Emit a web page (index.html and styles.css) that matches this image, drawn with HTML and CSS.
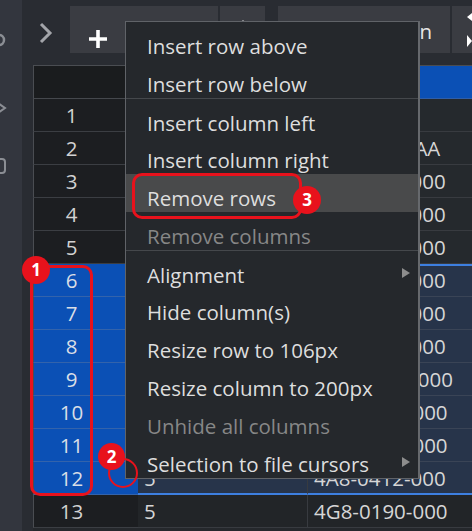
FILE: index.html
```html
<!DOCTYPE html>
<html>
<head>
<meta charset="utf-8">
<link rel="stylesheet" href="styles.css">
</head>
<body>
<div class="app">
  <aside class="sidebar">
    <svg width="22" height="531" viewBox="0 0 22 531">
      <circle cx="-1" cy="40" r="5" fill="none" stroke="#8b8e94" stroke-width="2.5"/>
      <path d="M-2 103 L5 108 L-2 113" fill="none" stroke="#8b8e94" stroke-width="2"/>
      <rect x="-10" y="159" width="15" height="14" rx="3" fill="none" stroke="#8b8e94" stroke-width="2"/>
    </svg>
  </aside>
  <main class="main">
    <div class="toolbar">
      <div class="nav">
        <svg width="14" height="22" viewBox="0 0 14 22"><path d="M2 2 L11 11 L2 20" fill="none" stroke="#a3a5aa" stroke-width="3"/></svg>
      </div>
      <div class="tbtn tb-add">
        <svg width="20" height="20" viewBox="0 0 20 20"><path d="M10 1 V19 M1 10 H19" stroke="#ffffff" stroke-width="3.6"/></svg>
      </div>
      <div class="tbtn tb-move">
        <svg width="14" height="20" viewBox="0 0 14 20"><polygon points="4,6 10,14 -2,14" fill="#ffffff"/></svg>
      </div>
      <div class="tbtn tb-col"><span class="tlabel">Insert column</span></div>
      <div class="tbtn tb-more">
        <svg width="20" height="47" viewBox="0 0 20 47"><polygon points="15,11 20,7 20,15" fill="#ffffff"/><polygon points="15,29 20,35 15,41" fill="#ffffff"/></svg>
      </div>
    </div>
    <div class="grid">
      <div class="row head"><div class="rn"></div><div class="c2"></div><div class="c3"></div></div>
      <div class="row"><div class="rn">1</div><div class="c2"></div><div class="c3"></div></div>
      <div class="row"><div class="rn">2</div><div class="c2"></div><div class="c3">Item code AA</div></div>
      <div class="row"><div class="rn">3</div><div class="c2"></div><div class="c3">4A8-0412-000</div></div>
      <div class="row"><div class="rn">4</div><div class="c2"></div><div class="c3">4A8-0413-000</div></div>
      <div class="row"><div class="rn">5</div><div class="c2"></div><div class="c3">4C8-0120-000</div></div>
      <div class="row sel first"><div class="rn">6</div><div class="c2"></div><div class="c3">4A8-0412-000</div></div>
      <div class="row sel"><div class="rn">7</div><div class="c2"></div><div class="c3">4A8-0412-000</div></div>
      <div class="row sel"><div class="rn">8</div><div class="c2"></div><div class="c3">4A8-0412-000</div></div>
      <div class="row sel"><div class="rn">9</div><div class="c2"></div><div class="c3">4AW-0214-000</div></div>
      <div class="row sel"><div class="rn">10</div><div class="c2"></div><div class="c3">4G8-0412-000</div></div>
      <div class="row sel"><div class="rn">11</div><div class="c2"></div><div class="c3">4G8-0412-000</div></div>
      <div class="row sel last"><div class="rn">12</div><div class="c2">5</div><div class="c3">4A8-0412-000</div></div>
      <div class="row"><div class="rn">13</div><div class="c2">5</div><div class="c3">4G8-0190-000</div></div>
    </div>
  </main>
</div>

<div class="menu">
  <div class="mi">Insert row above</div>
  <div class="mi">Insert row below</div>
  <div class="mi sep">Insert column left</div>
  <div class="mi">Insert column right</div>
  <div class="mi hl">Remove rows</div>
  <div class="mi dis">Remove columns</div>
  <div class="mi sep">Alignment<svg class="arrow" width="8" height="28" viewBox="0 0 8 28"><polygon points="0,7 8,12 0,17" fill="#8d8d8d"/></svg></div>
  <div class="mi">Hide column(s)</div>
  <div class="mi">Resize row to 106px</div>
  <div class="mi">Resize column to 200px</div>
  <div class="mi dis">Unhide all columns</div>
  <div class="mi">Selection to file cursors<svg class="arrow" width="8" height="28" viewBox="0 0 8 28"><polygon points="0,7 8,12 0,17" fill="#8d8d8d"/></svg></div>
</div>

<div class="mark mark-rows"></div>
<div class="mark mark-item"></div>
<div class="ring"></div>
<div class="badge b1">1</div>
<div class="badge b2">2</div>
<div class="badge b3">3</div>
</body>
</html>
```

FILE: styles.css
```css
html, body {
  margin: 0;
  padding: 0;
}
body {
  width: 472px;
  height: 531px;
  overflow: hidden;
  position: relative;
  background: #292c32;
  font-family: "Open Sans", "Noto Sans", sans-serif;
  font-size: 20.5px;
}
.app {
  display: flex;
  height: 531px;
}
.sidebar {
  width: 22px;
  flex: none;
  background: #33363e;
  overflow: hidden;
}
.sidebar svg { display: block; overflow: visible; }
.main {
  flex: 1;
  display: flex;
  flex-direction: column;
  min-width: 0;
  overflow: hidden;
}
.toolbar {
  height: 65px;
  box-sizing: border-box;
  padding-top: 6px;
  display: flex;
  align-items: flex-start;
  flex: none;
}
.nav {
  width: 48px;
  height: 47px;
  flex: none;
  display: flex;
  justify-content: center;
  padding-top: 16px;
  box-sizing: border-box;
}
.tbtn {
  height: 47px;
  flex: none;
  background: #3a3c42;
  box-sizing: border-box;
  display: flex;
}
.tb-add {
  width: 148px;
  margin-right: 2px;
  padding: 23px 0 0 18px;
}
.tb-move {
  width: 45px;
  margin-right: 13px;
  padding: 8px 0 0 19px;
  overflow: hidden;
}
.tb-col {
  width: 172px;
  margin-right: 2px;
  justify-content: flex-end;
  align-items: center;
  padding: 3px 18px 0 0;
}
.tlabel {
  color: #e6e6e6;
  line-height: 28px;
  white-space: nowrap;
}
.tb-more {
  width: 40px;
  overflow: hidden;
}
.tb-more svg { display: block; }

.grid {
  margin-left: 11px;
  background: #25282c;
  flex: 1;
}
.row {
  display: flex;
  height: 33px;
}
.row.head { height: 34px; }
.rn, .c2, .c3 {
  box-sizing: border-box;
  height: 100%;
  line-height: 33px;
  white-space: nowrap;
  overflow: hidden;
}
.rn {
  width: 105px;
  flex: none;
  border-left: 1px solid #4a4d52;
  border-bottom: 1px solid #3b3e43;
  background: #1c1e21;
  color: #d2d2d2;
  text-align: center;
  padding-right: 29px;
}
.c2 {
  width: 169px;
  flex: none;
  background: #222528;
  border-bottom: 1px solid #383b40;
  color: #d6d6d6;
  padding-left: 6px;
}
.c3 {
  flex: 1;
  background: #25292d;
  border-left: 1px solid #383b40;
  border-bottom: 1px solid #383b40;
  color: #d6d6d6;
  padding-left: 6px;
}
.row.head .rn {
  background: #1a1c1e;
  border-top: 1px solid #4a4d52;
  border-bottom-color: #45484d;
}
.row.head .c2, .row.head .c3 {
  background: #0b50b5;
  border-top: 1px solid #4a4d52;
  border-bottom-color: #2f5ea8;
  border-left-color: #2f5ea8;
}
.row.sel .rn {
  background: #0b50b5;
  border-bottom-color: #3363ab;
  color: #d9dee6;
}
.row.sel .c2, .row.sel .c3 {
  background: #27344a;
  border-bottom-color: #3a4456;
}
.row.sel.first .c2, .row.sel.first .c3 {
  box-shadow: inset 0 2px 0 #3d7fe0;
}
.row.sel.last .c2, .row.sel.last .c3 {
  border-bottom: 2px solid #3d7fe0;
}
.row:last-child .c2, .row:last-child .c3 {
  background: #222528;
}

/* context menu */
.menu {
  position: absolute;
  left: 125px;
  top: 21px;
  width: 295px;
  box-sizing: border-box;
  background: #25282c;
  border: 1px solid #606368;
  border-right: 2px solid #66696d;
}
.mi {
  height: 38px;
  box-sizing: border-box;
  padding: 10px 8px 0 21px;
  line-height: 28px;
  color: #dedede;
  display: flex;
  white-space: nowrap;
}
.mi.sep { border-top: 1px solid #45484c; }
.mi.hl { background: #494a4b; }
.mi.dis { color: #878787; }
.mi .arrow { margin-left: auto; display: block; }

/* annotations */
.mark {
  position: absolute;
  border: 3px solid #e8121c;
  border-radius: 10px;
  box-sizing: border-box;
}
.mark-rows {
  left: 30px;
  top: 265px;
  width: 63px;
  height: 231px;
}
.mark-item {
  left: 132px;
  top: 173px;
  width: 170px;
  height: 46px;
}
.ring {
  position: absolute;
  left: 108px;
  top: 458px;
  width: 30px;
  height: 30px;
  box-sizing: border-box;
  border: 2.5px solid #e8121c;
  border-radius: 50%;
}
.badge {
  position: absolute;
  width: 28px;
  height: 28px;
  border-radius: 50%;
  background: #e8121c;
  color: #ffffff;
  font-weight: 700;
  font-size: 17px;
  line-height: 28px;
  text-align: center;
}
.b1 { left: 22px; top: 256px; }
.b2 { left: 98px; top: 443px; width: 27px; height: 27px; line-height: 27px; }
.b3 { left: 293px; top: 186px; }
```
